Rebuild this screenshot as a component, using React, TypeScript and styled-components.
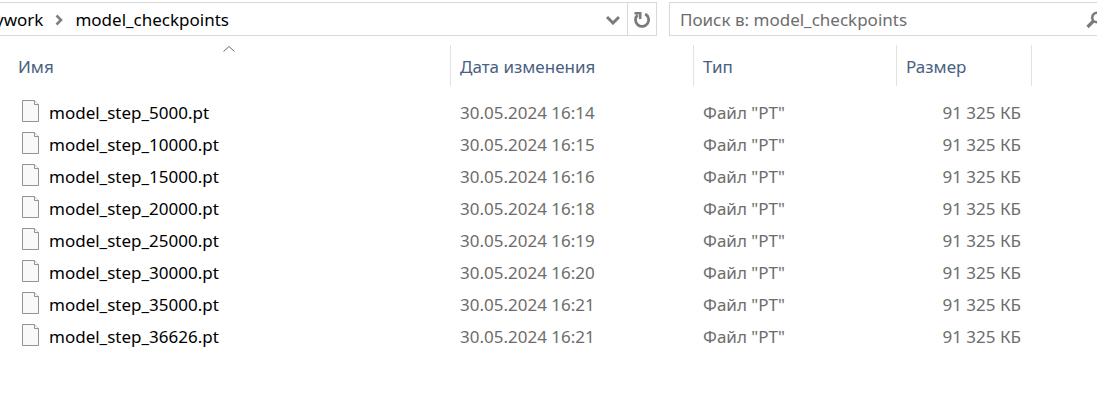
import React from "react";
import styled, { createGlobalStyle } from "styled-components";

const GlobalStyle = createGlobalStyle`
  * { box-sizing: border-box; }
  body {
    margin: 0;
    background: #fff;
    color: #000;
    font-family: "Noto Sans", "Open Sans", sans-serif;
    font-size: 17px;
    line-height: 24px;
    overflow-x: hidden;
  }
  button, input { font: inherit; color: inherit; }
`;

const Window = styled.main`
  overflow: hidden;
`;

const Toolbar = styled.header`
  display: flex;
  gap: 12px;
  padding-top: 2px;
  margin-right: -20px;
`;

const AddressBar = styled.nav`
  flex: 1;
  min-width: 0;
  display: flex;
  height: 34px;
  border: 1px solid #d9d9d9;
  border-left: 0;
`;

const Crumbs = styled.div`
  flex: 1;
  min-width: 0;
  display: flex;
  align-items: center;
  margin-left: -5px;
  padding-top: 1px;
  white-space: nowrap;
`;

const Crumb = styled.a`
  color: #000;
  text-decoration: none;
`;

const CrumbArrow = styled.svg`
  flex: none;
  margin: 0 12px;
`;

const BarButton = styled.button<{ $divided?: boolean }>`
  display: flex;
  align-items: center;
  justify-content: center;
  width: 29px;
  padding: 2px 0 0;
  border: 0;
  border-left: ${(p) => (p.$divided ? "1px solid #d9d9d9" : "0")};
  background: transparent;
`;

const SearchBox = styled.form`
  display: flex;
  align-items: center;
  width: 448px;
  height: 34px;
  border: 1px solid #d9d9d9;
  padding: 2px 12px 0 10px;
`;

const SearchInput = styled.input`
  flex: 1;
  min-width: 0;
  padding: 0;
  border: 0;
  outline: 0;
  background: transparent;
  color: #6d6d6d;
  &::placeholder { color: #6d6d6d; opacity: 1; }
`;

const SearchButton = styled.button`
  display: flex;
  padding: 0;
  border: 0;
  background: transparent;
`;

const FileTable = styled.table`
  width: 100%;
  margin-top: 9px;
  table-layout: fixed;
  border-collapse: separate;
  border-spacing: 0;
`;

const Column = styled.col<{ $width?: number }>`
  width: ${(p) => (p.$width ? `${p.$width}px` : "auto")};
`;

const HeadCell = styled.th<{ $first?: boolean }>`
  height: 41px;
  padding: 0;
  padding-left: ${(p) => (p.$first ? "8px" : "0")};
  border-right: 1px solid #e2e2e2;
  font-weight: 400;
`;

const SortButton = styled.button<{ $first?: boolean }>`
  position: relative;
  display: block;
  width: 100%;
  height: 41px;
  padding: 2px 0 0 ${(p) => (p.$first ? "10px" : "9px")};
  border: 0;
  background: transparent;
  color: #4a607f;
  text-align: left;
`;

const SortMark = styled.svg`
  position: absolute;
  top: 0;
  left: 50%;
  transform: translateX(-50%);
`;

const Body = styled.tbody`
  &::before {
    content: "";
    display: table-row;
    height: 11px;
  }
`;

const Cell = styled.td<{ $right?: boolean }>`
  height: 32px;
  padding: 0 11px 0 9px;
  color: #6d6d6d;
  text-align: ${(p) => (p.$right ? "right" : "left")};
  white-space: nowrap;
`;

const FileName = styled.div`
  display: flex;
  align-items: center;
  gap: 10px;
  padding-left: 13px;
  color: #000;
`;

const FileGlyph = styled.svg`
  flex: none;
  margin-bottom: 4px;
`;

const files = [
  { step: 5000, time: "16:14" },
  { step: 10000, time: "16:15" },
  { step: 15000, time: "16:16" },
  { step: 20000, time: "16:18" },
  { step: 25000, time: "16:19" },
  { step: 30000, time: "16:20" },
  { step: 35000, time: "16:21" },
  { step: 36626, time: "16:21" },
];

function FileIcon() {
  return (
    <FileGlyph width="17" height="22" viewBox="0 0 17 22" aria-hidden="true">
      <path d="M.5 .5H12.5L16.5 4.5V21.5H.5Z" fill="#f8f9f9" stroke="#929292" />
      <path d="M12.5 .5V4.5H16.5" fill="#fff" stroke="#929292" />
    </FileGlyph>
  );
}

export default function App() {
  return (
    <>
      <GlobalStyle />
      <Window>
        <Toolbar>
          <AddressBar aria-label="Адрес">
            <Crumbs>
              <Crumb href="#work">ywork</Crumb>
              <CrumbArrow width="8" height="12" viewBox="0 0 8 12" aria-hidden="true">
                <path d="M1.5 1.5L6 6L1.5 10.5" fill="none" stroke="#808080" strokeWidth="2.6" />
              </CrumbArrow>
              <Crumb href="#model_checkpoints">model_checkpoints</Crumb>
            </Crumbs>
            <BarButton type="button" aria-label="Предыдущие расположения">
              <svg width="14" height="10" viewBox="0 0 14 10" aria-hidden="true">
                <path d="M1 2L7 8L13 2" fill="none" stroke="#7b7b7b" strokeWidth="3" />
              </svg>
            </BarButton>
            <BarButton type="button" $divided aria-label="Обновить">
              <svg width="18" height="18" viewBox="0 0 18 18" aria-hidden="true">
                <path d="M12.2 3A6.6 6.6 0 1 1 4.6 4" fill="none" stroke="#7b7b7b" strokeWidth="2.8" />
                <path d="M1.5 2.3H7.2V8" fill="none" stroke="#7b7b7b" strokeWidth="2.6" />
              </svg>
            </BarButton>
          </AddressBar>
          <SearchBox role="search">
            <SearchInput aria-label="Поиск" placeholder="Поиск в: model_checkpoints" />
            <SearchButton type="button" aria-label="Найти">
              <svg width="18" height="18" viewBox="0 0 18 18" aria-hidden="true">
                <circle cx="11" cy="6.5" r="4.8" fill="none" stroke="#7b7b7b" strokeWidth="2.6" />
                <path d="M7.5 10L1.5 16" stroke="#7b7b7b" strokeWidth="3.2" />
              </svg>
            </SearchButton>
          </SearchBox>
        </Toolbar>
        <FileTable>
          <colgroup>
            <Column />
            <Column $width={243} />
            <Column $width={203} />
            <Column $width={135} />
            <Column $width={65} />
          </colgroup>
          <thead>
            <tr>
              <HeadCell $first scope="col" aria-sort="ascending">
                <SortButton type="button" $first>
                  Имя
                  <SortMark width="12" height="8" viewBox="0 0 12 8" aria-hidden="true">
                    <path d="M.5 6.5L6 1.5L11.5 6.5" fill="none" stroke="#6b6b6b" />
                  </SortMark>
                </SortButton>
              </HeadCell>
              <HeadCell scope="col">
                <SortButton type="button">Дата изменения</SortButton>
              </HeadCell>
              <HeadCell scope="col">
                <SortButton type="button">Тип</SortButton>
              </HeadCell>
              <HeadCell scope="col">
                <SortButton type="button">Размер</SortButton>
              </HeadCell>
              <td />
            </tr>
          </thead>
          <Body>
            {files.map((file) => (
              <tr key={file.step}>
                <Cell>
                  <FileName>
                    <FileIcon />
                    {`model_step_${file.step}.pt`}
                  </FileName>
                </Cell>
                <Cell>{`30.05.2024 ${file.time}`}</Cell>
                <Cell>Файл "PT"</Cell>
                <Cell $right>91 325 КБ</Cell>
                <td />
              </tr>
            ))}
          </Body>
        </FileTable>
      </Window>
    </>
  );
}
